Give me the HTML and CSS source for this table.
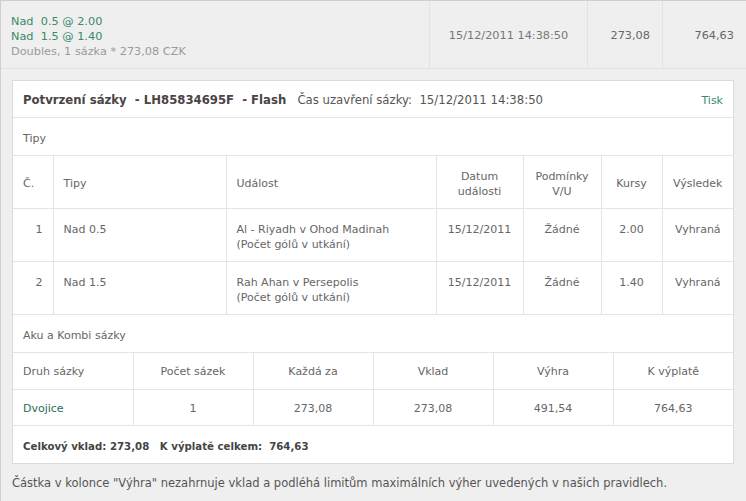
FILE: index.html
```html
<!DOCTYPE html>
<html lang="cs">
<head>
<meta charset="utf-8">
<link rel="stylesheet" href="styles.css">
</head>
<body>
<div class="wrap">
  <div class="summary">
    <div class="s-cell s-tips">
      <div class="green">Nad&nbsp; 0.5 @ 2.00</div>
      <div class="green">Nad&nbsp; 1.5 @ 1.40</div>
      <div class="muted">Doubles, 1 sázka * 273,08 CZK</div>
    </div>
    <div class="s-cell s-date">15/12/2011 14:38:50</div>
    <div class="s-cell s-num">273,08</div>
    <div class="s-cell s-num s-last">764,63</div>
  </div>
  <div class="detail">
    <div class="panel">
      <div class="p-head">
        <div class="p-title"><b>Potvrzení sázky&nbsp; - LH85834695F&nbsp; - Flash</b>&nbsp;&nbsp; Čas uzavření sázky:&nbsp; 15/12/2011 14:38:50</div>
        <a class="tisk">Tisk</a>
      </div>
      <div class="p-sec">Tipy</div>
      <table class="t-tips">
        <colgroup>
          <col class="c1"><col class="c2"><col class="c3"><col class="c4"><col class="c5"><col class="c6"><col class="c7">
        </colgroup>
        <thead>
          <tr>
            <th class="left">Č.</th>
            <th class="left">Tipy</th>
            <th class="left">Událost</th>
            <th>Datum<br>události</th>
            <th>Podmínky<br>V/U</th>
            <th>Kursy</th>
            <th>Výsledek</th>
          </tr>
        </thead>
        <tbody>
          <tr>
            <td class="right">1</td>
            <td>Nad 0.5</td>
            <td>Al - Riyadh v Ohod Madinah<br>(Počet gólů v utkání)</td>
            <td class="center">15/12/2011</td>
            <td class="center">Žádné</td>
            <td class="center">2.00</td>
            <td class="center">Vyhraná</td>
          </tr>
          <tr>
            <td class="right">2</td>
            <td>Nad 1.5</td>
            <td>Rah Ahan v Persepolis<br>(Počet gólů v utkání)</td>
            <td class="center">15/12/2011</td>
            <td class="center">Žádné</td>
            <td class="center">1.40</td>
            <td class="center">Vyhraná</td>
          </tr>
        </tbody>
      </table>
      <div class="p-sec">Aku a Kombi sázky</div>
      <table class="t-multi">
        <thead>
          <tr>
            <th class="left">Druh sázky</th>
            <th>Počet sázek</th>
            <th>Každá za</th>
            <th>Vklad</th>
            <th>Výhra</th>
            <th>K výplatě</th>
          </tr>
        </thead>
        <tbody>
          <tr>
            <td class="green-dark">Dvojice</td>
            <td class="center">1</td>
            <td class="center">273,08</td>
            <td class="center">273,08</td>
            <td class="center">491,54</td>
            <td class="center">764,63</td>
          </tr>
        </tbody>
      </table>
      <div class="p-total"><b>Celkový vklad: 273,08&nbsp;&nbsp; K výplatě celkem:&nbsp; 764,63</b></div>
    </div>
    <p class="note">Částka v kolonce "Výhra" nezahrnuje vklad a podléhá limitům maximálních výher uvedených v našich pravidlech.</p>
  </div>
</div>
</body>
</html>
```

FILE: styles.css
```css
html, body {
  margin: 0;
  padding: 0;
  background: #efefef;
}
body {
  font-family: "DejaVu Sans", Verdana, sans-serif;
  font-size: 11px;
  line-height: 15px;
  color: #666;
  width: 746px;
  height: 501px;
  overflow: hidden;
}
.wrap {
  border-top: 1px solid #cfcfcf;
  border-left: 1px solid #cfcfcf;
  background: #efefef;
  height: 500px;
}
.summary {
  display: grid;
  grid-template-columns: 429px 158px 75px 1fr;
  height: 67px;
  border-bottom: 1px solid #e2e2e2;
  font-size: 11.3px;
}
.s-cell {
  border-right: 1px solid #e2e2e2;
  display: flex;
  align-items: center;
  padding-top: 2px;
}
.s-last { border-right: none; }
.s-tips {
  flex-direction: column;
  align-items: flex-start;
  justify-content: flex-start;
  padding: 13px 10px 0;
}
.s-date { justify-content: center; color: #777; }
.s-num { justify-content: flex-end; padding-right: 12px; color: #666; }
.s-last { padding-right: 12px; }
.green { color: #3a8a68; }
.muted { color: #9a9a9a; }
.detail {
  padding: 11px 11px 0 11px;
}
.panel {
  background: #fff;
  border: 1px solid #dcdcdc;
  width: 720px;
}
.p-head {
  display: flex;
  justify-content: space-between;
  align-items: center;
  height: 34px;
  padding: 2px 10px 0;
  border-bottom: 1px solid #e4e4e4;
}
.p-title { color: #555; font-size: 11.7px; }
.p-title b { color: #4a4444; }
.tisk { color: #3a8a68; }
.p-sec {
  height: 35px;
  line-height: 37px;
  padding: 2px 10px 0;
  border-bottom: 1px solid #e4e4e4;
}
table {
  border-collapse: collapse;
  width: 100%;
  table-layout: fixed;
}
th, td {
  border-right: 1px solid #e4e4e4;
  border-bottom: 1px solid #e4e4e4;
  padding: 0 10px;
  font-weight: normal;
  text-align: left;
}
th { text-align: center; }
th:last-child, td:last-child { border-right: none; }
th.left { text-align: left; }
td.right { text-align: right; }
td.center { text-align: center; }
.t-tips .c1 { width: 40px; }
.t-tips .c2 { width: 173px; }
.t-tips .c3 { width: 210px; }
.t-tips .c4 { width: 87px; }
.t-tips .c5 { width: 78px; }
.t-tips .c6 { width: 61px; }
.t-tips thead th { height: 49px; vertical-align: middle; padding-top: 3px; }
.t-tips tbody td { height: 39px; vertical-align: top; padding-top: 13px; }
.t-multi th { height: 35px; padding-top: 1px; }
.t-multi td { height: 33px; padding-top: 2px; }
.green-dark { color: #2f6e52; }
.p-total {
  height: 35px;
  line-height: 37px;
  padding: 2px 10px 0;
  color: #444;
  font-size: 10.2px;
}
.note {
  margin: 12px 0 0 0;
  font-size: 11.5px;
  color: #555;
}
```
